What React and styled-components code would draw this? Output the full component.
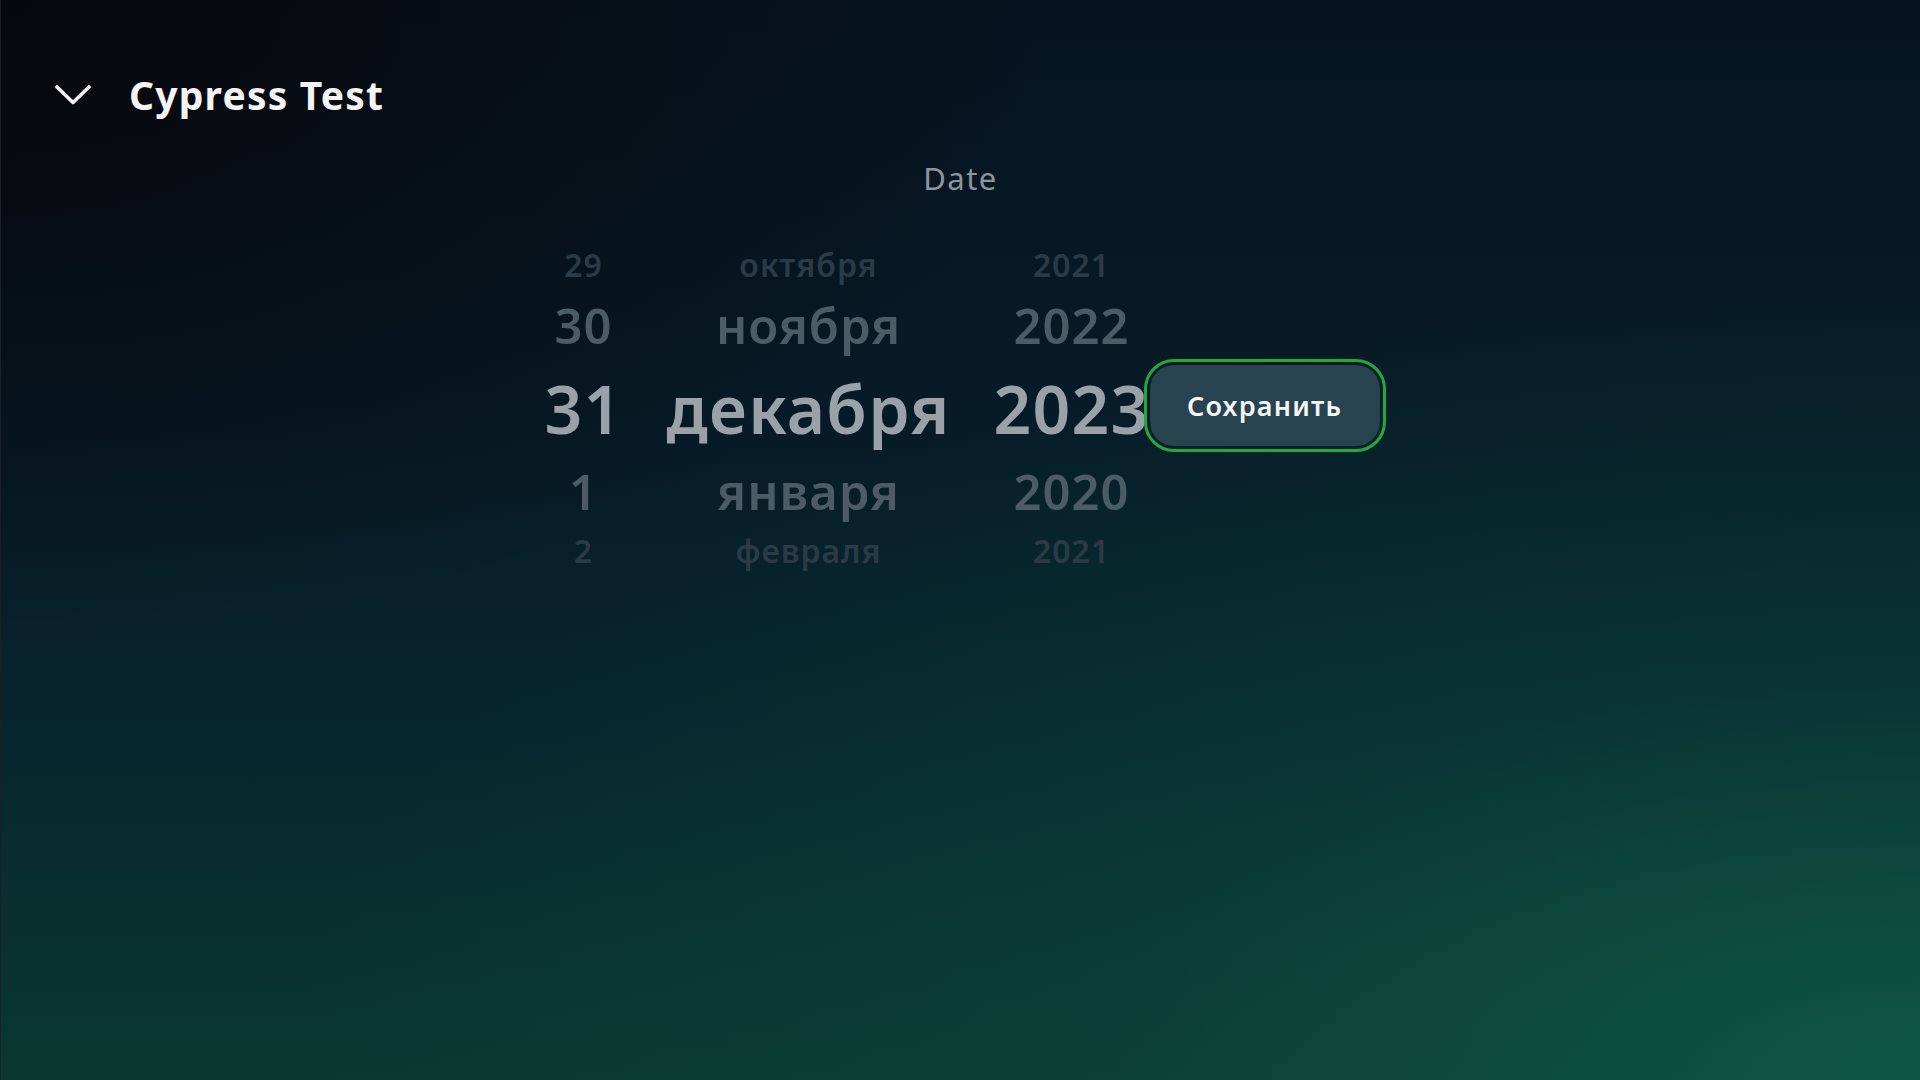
import React from "react";
import styled, { createGlobalStyle } from "styled-components";

const Global = createGlobalStyle`
  html, body { margin: 0; padding: 0; }
  body { font-family: "Noto Sans", "Open Sans", sans-serif; }
  * { box-sizing: border-box; }
`;

const Page = styled.div`
  width: 100%;
  min-height: 100vh;
  height: 1080px;
  overflow: hidden;
  border-left: 1px solid #1b2027;
  background:
    radial-gradient(ellipse 85% 75% at 100% 100%, rgba(15, 92, 70, 0.85) 0%, rgba(13, 75, 62, 0.4) 50%, rgba(12, 60, 55, 0) 100%),
    radial-gradient(ellipse 55% 60% at 0% 0%, rgba(7, 8, 12, 1) 0%, rgba(7, 8, 12, 0.6) 45%, rgba(7, 8, 12, 0) 100%),
    linear-gradient(to bottom, #061421 0%, #071b27 40%, #08262e 68%, #0a3830 100%);
  padding-top: 71px;
  display: flex;
  flex-direction: column;
`;

const Header = styled.header`
  display: flex;
  align-items: center;
  gap: 38px;
  padding-left: 54px;
  height: 48px;
`;

const Chevron = styled.svg`
  width: 36px;
  height: 20px;
  flex: none;
`;

const Title = styled.h1`
  margin: 0;
  font-size: 39px;
  line-height: 48px;
  font-weight: 700;
  color: #f4f4f4;
  letter-spacing: 1.2px;
`;

const Label = styled.div`
  margin-top: 39px;
  text-align: center;
  font-size: 31px;
  line-height: 40px;
  color: #8c949c;
  letter-spacing: 1.5px;
`;

const PickerRow = styled.div`
  margin-top: 42px;
  display: flex;
  justify-content: center;
  align-items: center;
  padding-right: 13px;
`;

const Column = styled.div`
  width: ${(p) => p.$w}px;
  margin-right: ${(p) => p.$gap || 0}px;
  display: flex;
  flex-direction: column;
  align-items: center;
  font-weight: 600;
`;

const sizes = {
  far: { h: 50, f: 32, c: "#2b3b46", ls: 1 },
  near: { h: 70, f: 49, c: "#4c5c66", ls: 1 },
  sel: { h: 96, f: 66, c: "#99a2aa", ls: 1.3 },
};

const Item = styled.div`
  height: ${(p) => sizes[p.$k].h}px;
  line-height: ${(p) => sizes[p.$k].h}px;
  font-size: ${(p) => sizes[p.$k].f}px;
  letter-spacing: ${(p) => sizes[p.$k].ls}px;
  color: ${(p) => sizes[p.$k].c};
  white-space: nowrap;
`;

const SaveButton = styled.button`
  width: 230px;
  height: 81px;
  margin-bottom: 5px;
  border: none;
  border-radius: 24px;
  background: #26434f;
  color: #f6f6f6;
  font-family: "Noto Sans", "Open Sans", sans-serif;
  font-weight: 600;
  font-size: 27px;
  letter-spacing: 1.2px;
  outline: 3px solid #22a83b;
  outline-offset: 3px;
  cursor: pointer;
`;

const days = [
  ["far", "29"],
  ["near", "30"],
  ["sel", "31"],
  ["near", "1"],
  ["far", "2"],
];
const months = [
  ["far", "октября"],
  ["near", "ноября"],
  ["sel", "декабря"],
  ["near", "января"],
  ["far", "февраля"],
];
const years = [
  ["far", "2021"],
  ["near", "2022"],
  ["sel", "2023"],
  ["near", "2020"],
  ["far", "2021"],
];

export default function App() {
  return (
    <Page>
      <Global />
      <Header>
        <Chevron viewBox="0 0 36 20" fill="none">
          <polyline
            points="2,2 18,17.5 34,2"
            stroke="#f4f4f4"
            strokeWidth="3.6"
            strokeLinecap="round"
            strokeLinejoin="round"
          />
        </Chevron>
        <Title>Cypress Test</Title>
      </Header>
      <Label>Date</Label>
      <PickerRow>
        <Column $w={110} $gap={20}>
          {days.map(([k, t], i) => (
            <Item key={i} $k={k}>{t}</Item>
          ))}
        </Column>
        <Column $w={300} $gap={38}>
          {months.map(([k, t], i) => (
            <Item key={i} $k={k}>{t}</Item>
          ))}
        </Column>
        <Column $w={150} $gap={3}>
          {years.map(([k, t], i) => (
            <Item key={i} $k={k}>{t}</Item>
          ))}
        </Column>
        <SaveButton>Сохранить</SaveButton>
      </PickerRow>
    </Page>
  );
}
